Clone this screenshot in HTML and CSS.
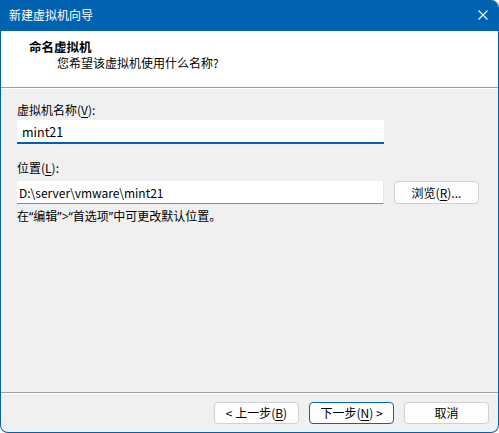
FILE: index.html
```html
<!DOCTYPE html>
<html lang="zh-CN">
<head>
<meta charset="utf-8">
<title>新建虚拟机向导</title>
<link rel="stylesheet" href="styles.css">
</head>
<body>
<div class="window">
  <div class="titlebar">
    <span class="title">新建虚拟机向导</span>
    <span class="close">
      <svg width="10" height="10" viewBox="0 0 10 10"><path d="M0.5 0.5 L9.5 9.5 M9.5 0.5 L0.5 9.5" stroke="#ffffff" stroke-width="1.1" fill="none"/></svg>
    </span>
  </div>
  <div class="header">
    <div class="heading">命名虚拟机</div>
    <div class="subheading">您希望该虚拟机使用什么名称?</div>
  </div>
  <div class="content">
    <div class="label">虚拟机名称(<u>V</u>):</div>
    <div class="field name-field">mint21</div>
    <div class="label label-loc">位置(<u>L</u>):</div>
    <div class="loc-row">
      <div class="field loc-field">D:\server\vmware\mint21</div>
      <div class="btn browse">浏览(<u>R</u>)...</div>
    </div>
    <div class="hint">在<span class="q">“</span>编辑<span class="q">”&gt;“</span>首选项<span class="q">”</span>中可更改默认位置。</div>
  </div>
  <div class="footer">
    <div class="btn">&lt; 上一步(<u>B</u>)</div>
    <div class="btn primary">下一步(<u>N</u>) &gt;</div>
    <div class="btn">取消</div>
  </div>
</div>
</body>
</html>
```

FILE: styles.css
```css
html, body {
  margin: 0;
  padding: 0;
  background: #ffffff;
}
body {
  font-family: "Noto Sans CJK SC", "Noto Sans", sans-serif;
  font-size: 12px;
  color: #000000;
}
.window {
  width: 499px;
  height: 433px;
  box-sizing: border-box;
  border: 1px solid #0063b1;
  border-top: none;
  border-radius: 0 8px 8px 8px;
  background: #f0f0f0;
  display: flex;
  flex-direction: column;
  overflow: hidden;
}
.titlebar {
  height: 31px;
  background: #0063b1;
  color: #ffffff;
  display: flex;
  align-items: center;
  justify-content: space-between;
  padding: 0 10px 1px 8px;
  box-sizing: border-box;
  line-height: 16px;
}
.title {
  font-size: 12px;
}
.close {
  display: flex;
  align-items: center;
  width: 10px;
  height: 10px;
}
.header {
  background: #ffffff;
  height: 57px;
  box-sizing: border-box;
  padding: 7px 0 0 28px;
  border-bottom: 1px solid #a0a0a0;
}
.heading {
  font-weight: bold;
  line-height: 17px;
  font-size: 12.5px;
}
.subheading {
  line-height: 16px;
  padding-left: 28px;
}
.content {
  flex: 1;
  border-top: 1px solid #ffffff;
  padding: 13px 0 0 16px;
  display: flex;
  flex-direction: column;
}
.label {
  line-height: 16px;
}
.label-loc {
  margin-top: 16px;
}
.field {
  background: #ffffff;
  box-sizing: border-box;
  width: 367px;
  display: flex;
  align-items: center;
  white-space: nowrap;
}
.name-field {
  margin-top: 2px;
  height: 24px;
  padding: 0 6px 0 5px;
  border-bottom: 2px solid #005fb8;
  font-size: 12.5px;
}
.loc-row {
  margin-top: 5px;
  display: flex;
  gap: 10px;
  align-items: flex-start;
}
.loc-field {
  height: 23px;
  padding: 0 3px 0 2px;
  border-bottom: 1px solid #8a8a8a;
  border-right: 1px solid #e6e6e6;
}
.btn {
  width: 85px;
  height: 22px;
  box-sizing: border-box;
  border: 1px solid #d0d0d0;
  border-radius: 4px;
  background: #fdfdfd;
  display: flex;
  align-items: center;
  justify-content: center;
  line-height: 16px;
  white-space: nowrap;
}
.browse {
  height: 23px;
}
.hint {
  margin-top: 4px;
  line-height: 16px;
}
.q {
  font-family: "Noto Sans", sans-serif;
}
.footer {
  height: 40px;
  box-sizing: border-box;
  border-top: 1px solid #a0a0a0;
  box-shadow: inset 0 1px 0 #ffffff;
  padding: 9px 9px 0 0;
  display: flex;
  justify-content: flex-end;
  gap: 10px;
}
.btn.primary {
  border-color: #0067c0;
}
u {
  text-decoration: underline;
  text-underline-offset: 2px;
}
```
